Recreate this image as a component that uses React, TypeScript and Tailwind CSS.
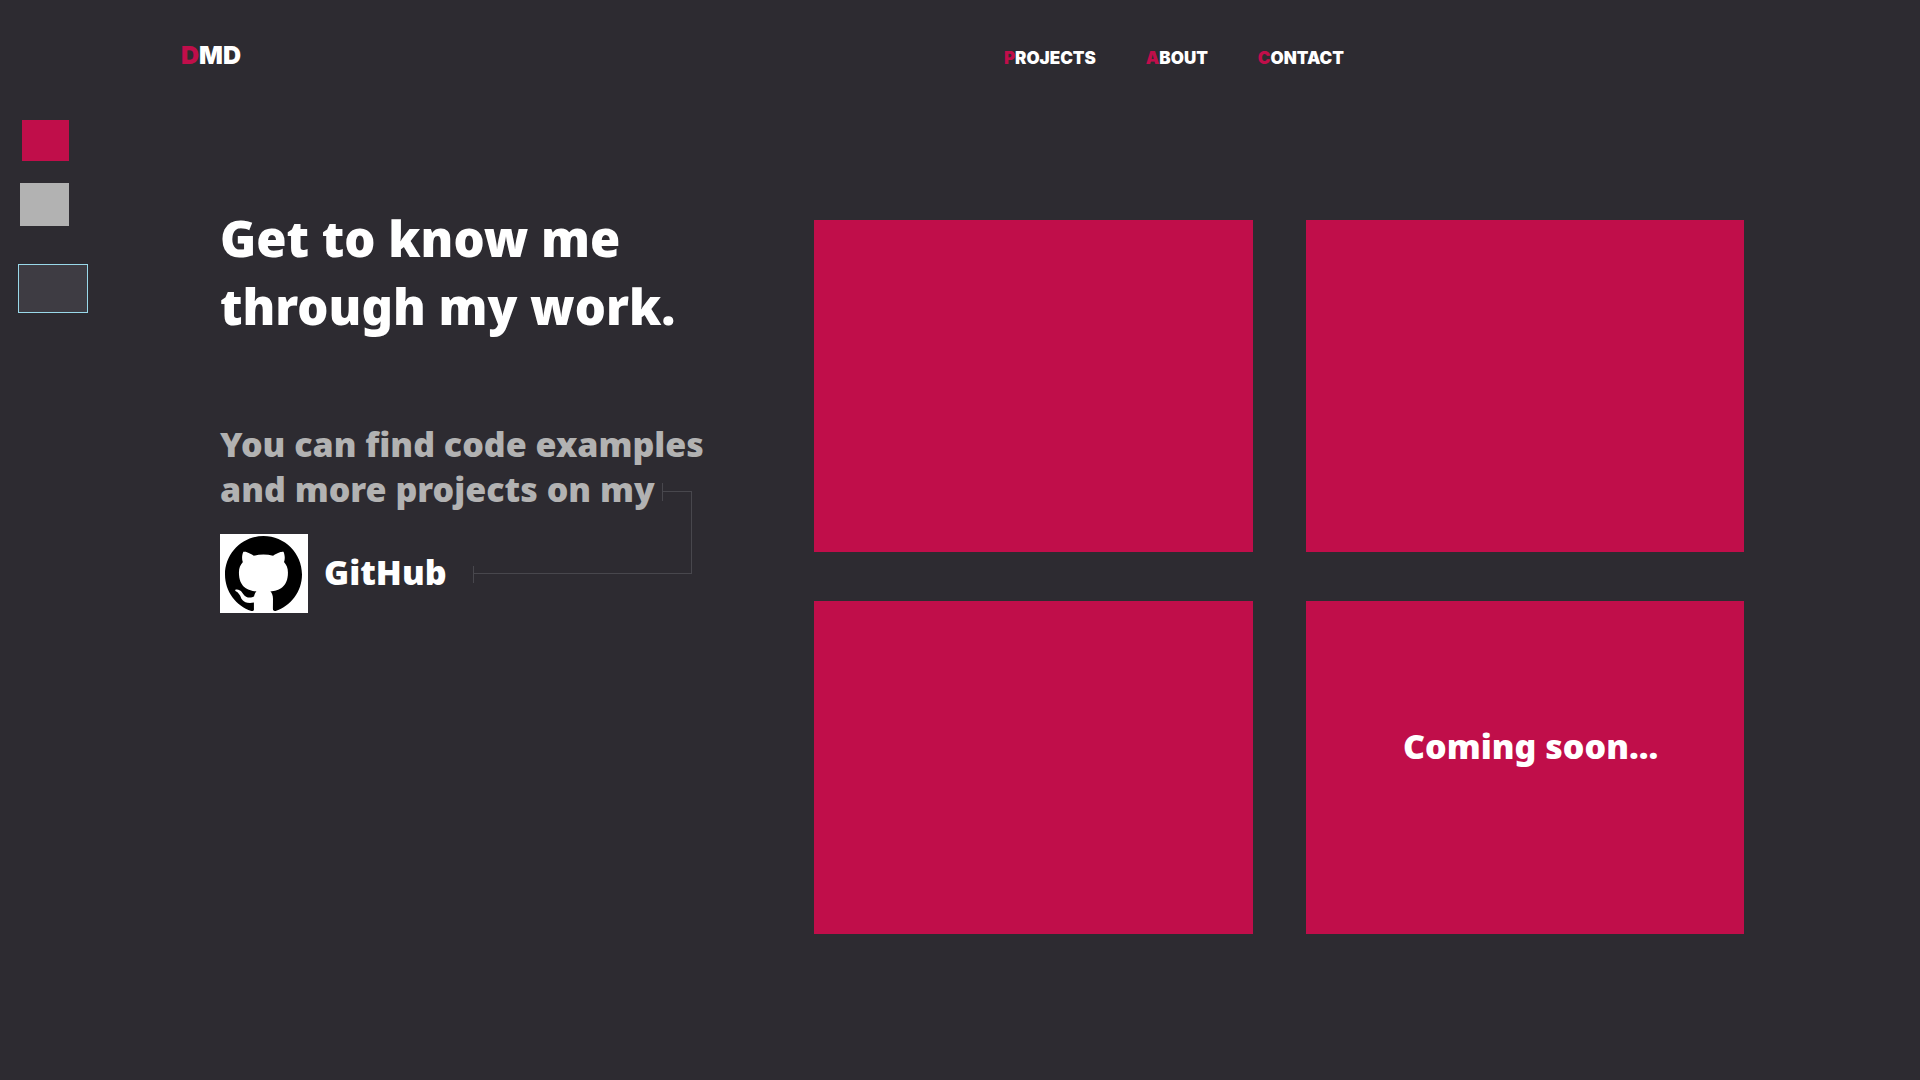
import React from "react";

const navItems = [
  { label: "PROJECTS", href: "#projects" },
  { label: "ABOUT", href: "#about" },
  { label: "CONTACT", href: "#contact" },
];

function AccentWord({ text }: { text: string }) {
  return (
    <>
      <span className="text-[#c00e4a]">{text[0]}</span>
      {text.slice(1)}
    </>
  );
}

function Header() {
  return (
    <header className="flex h-[120px] items-start justify-between pt-[39px] pr-[30%] pl-[181px] font-[Inter,sans-serif]">
      <a href="#home" className="text-[25px] leading-8 font-black">
        <AccentWord text="DMD" />
      </a>
      <nav aria-label="Main" className="flex gap-[50px] pt-[5px]">
        {navItems.map((item) => (
          <a key={item.label} href={item.href} className="text-[17px] leading-7 font-black">
            <AccentWord text={item.label} />
          </a>
        ))}
      </nav>
    </header>
  );
}

function Palette() {
  return (
    <aside aria-label="Palette" className="w-[219px] shrink-0 pl-[18px]">
      <div className="ml-1 h-[41px] w-[47px] bg-[#c00e4a]" />
      <div className="mt-[22px] ml-0.5 h-[43px] w-[49px] bg-[#b2b2b2]" />
      <div className="mt-[38px] h-[49px] w-[70px] border border-[#99d9ea] bg-[#3e3c43]" />
    </aside>
  );
}

function GitHubMark() {
  return (
    <span className="flex h-[79px] w-[88px] items-center justify-center bg-white pr-0.5">
      <svg viewBox="0 0 24 24" className="size-[77px]" fill="#000" aria-hidden="true">
        <path d="M12 .297c-6.63 0-12 5.373-12 12 0 5.303 3.438 9.8 8.205 11.385.6.113.82-.258.82-.577 0-.285-.01-1.04-.015-2.04-3.338.724-4.042-1.61-4.042-1.61C4.422 18.07 3.633 17.7 3.633 17.7c-1.087-.744.084-.729.084-.729 1.205.084 1.838 1.236 1.838 1.236 1.07 1.835 2.809 1.305 3.495.998.108-.776.417-1.305.76-1.605-2.665-.3-5.466-1.332-5.466-5.93 0-1.31.465-2.38 1.235-3.22-.135-.303-.54-1.523.105-3.176 0 0 1.005-.322 3.3 1.23.96-.267 1.98-.399 3-.405 1.02.006 2.04.138 3 .405 2.28-1.552 3.285-1.23 3.285-1.23.645 1.653.24 2.873.12 3.176.765.84 1.23 1.91 1.23 3.22 0 4.61-2.805 5.625-5.475 5.92.42.36.81 1.096.81 2.22 0 1.606-.015 2.896-.015 3.286 0 .315.21.69.825.57C20.565 22.092 24 17.592 24 12.297c0-6.627-5.373-12-12-12" />
      </svg>
    </span>
  );
}

function Intro() {
  return (
    <section className="w-[595px] shrink-0 pt-[84px] pl-px">
      <h1 className="text-[49px] leading-[68px] font-black">
        Get to know me
        <br />
        through my work.
      </h1>
      <div className="relative mt-[82px]">
        <p className="text-[34px] leading-[45px] font-black text-[#b2b2b2]">
          You can find code examples
          <br />
          and more projects on my
        </p>
        <a href="#github" className="mt-[22px] flex w-fit items-center gap-4 text-[34px] leading-10 font-black">
          <GitHubMark />
          <span className="pb-1">GitHub</span>
        </a>
        <svg
          width="219"
          height="100"
          className="absolute top-[61px] left-[253px]"
          fill="none"
          stroke="#48474d"
          shapeRendering="crispEdges"
          aria-hidden="true"
        >
          <path d="M189.500 0v18M189.500 8.500h29v82H.500M.500 83v17" />
        </svg>
      </div>
    </section>
  );
}

function Projects() {
  const tile = "aspect-[438/332] bg-[#c00e4a]";
  return (
    <section aria-label="Projects" className="grid flex-1 grid-cols-2 content-start gap-x-[53px] gap-y-[49px] pt-[100px] pr-[176px]">
      <article className={tile} />
      <article className={tile} />
      <article className={tile} />
      <article className="flex aspect-[438/332] items-center justify-center bg-[#c00e4a] pb-11 pl-3">
        <p className="text-[34px] leading-10 font-black">Coming soon...</p>
      </article>
    </section>
  );
}

export default function App() {
  return (
    <div className="min-h-screen bg-[#2d2b31] font-['Noto_Sans',sans-serif] text-white">
      <Header />
      <main className="flex">
        <Palette />
        <Intro />
        <Projects />
      </main>
    </div>
  );
}
